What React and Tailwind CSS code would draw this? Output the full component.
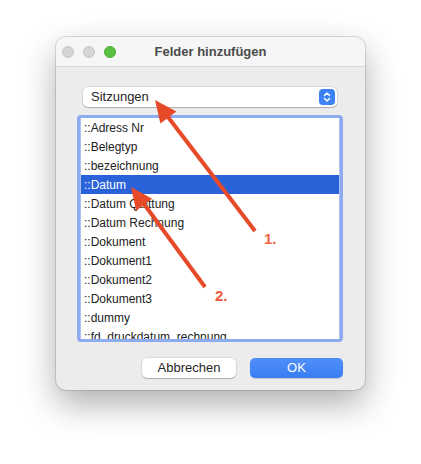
import React from "react";

const fields = [
  "::Adress Nr",
  "::Belegtyp",
  "::bezeichnung",
  "::Datum",
  "::Datum Quittung",
  "::Datum Rechnung",
  "::Dokument",
  "::Dokument1",
  "::Dokument2",
  "::Dokument3",
  "::dummy",
  "::fd_druckdatum_rechnung",
];

const Stepper = () => (
  <div className="w-4 h-4 rounded-[4px] bg-[#3b82f7] flex items-center justify-center">
    <svg width="10" height="12" viewBox="0 0 10 12" fill="none">
      <path d="M2.5 4.5 L5 2 L7.5 4.5" stroke="white" strokeWidth="1.5" strokeLinecap="round" strokeLinejoin="round" />
      <path d="M2.5 7.5 L5 10 L7.5 7.5" stroke="white" strokeWidth="1.5" strokeLinecap="round" strokeLinejoin="round" />
    </svg>
  </div>
);

// red annotation arrows drawn over the dialog
const Arrows = () => (
  <svg className="absolute inset-0 pointer-events-none" width="421" height="464" viewBox="0 0 421 464">
    <line x1="255" y1="231" x2="168" y2="117" stroke="#e64a28" strokeWidth="4" />
    <polygon points="155,100 176.4,111.4 160.4,123.6" fill="#e64a28" />
    <line x1="205" y1="287" x2="144" y2="204" stroke="#e64a28" strokeWidth="4" />
    <polygon points="131,187 152.1,198.8 136.1,210.7" fill="#e64a28" />
    <text x="264" y="244" fill="#ee6444" fontSize="15" fontWeight="bold" fontFamily="Liberation Sans, sans-serif">1.</text>
    <text x="215" y="301" fill="#ee5a38" fontSize="15" fontWeight="bold" fontFamily="Liberation Sans, sans-serif">2.</text>
  </svg>
);

const App = () => {
  return (
    <div className="relative w-[421px] h-[464px] bg-white pt-[37px] pl-[56px] font-['Liberation_Sans',sans-serif]">
      <div className="w-[309px] h-[353px] rounded-[10px] bg-[#ececec] overflow-hidden shadow-[0_0_0_1px_rgba(0,0,0,0.12),0_14px_34px_rgba(0,0,0,0.32)] flex flex-col">
        <div className="h-[30px] bg-[#f6f6f6] border-b border-[#d9d9d9] flex items-center relative">
          <div className="absolute left-[6px] top-[9px] flex gap-[9px]">
            <div className="w-3 h-3 rounded-full bg-[#d5d5d5] border border-[#c4c4c4]" />
            <div className="w-3 h-3 rounded-full bg-[#d5d5d5] border border-[#c4c4c4]" />
            <div className="w-3 h-3 rounded-full bg-[#5ac03f] border border-[#4aa832]" />
          </div>
          <div className="flex-1 text-center text-[13px] font-bold text-[#4b4b4b]">
            Felder hinzufügen
          </div>
        </div>

        <div className="mt-5 ml-[27px] w-[254px] h-5 bg-white rounded-[5px] shadow-[0_0_0_0.5px_rgba(0,0,0,0.15),0_1px_1px_rgba(0,0,0,0.2)] flex items-center justify-between pl-2 pr-[2px]">
          <span className="text-[13px] text-[#262626]">Sitzungen</span>
          <Stepper />
        </div>

        <div className="mt-2 ml-[21px] w-[266px] h-[227px] border-[3px] border-[#8eaaf0] rounded-[4px] bg-white overflow-hidden">
          <div className="h-full border-l border-r border-[#aebfee] overflow-hidden">
            {fields.map((f, i) => (
              <div
                key={f}
                className={
                  "h-[19px] flex items-center pl-[3px] text-[12px] " +
                  (i === 3 ? "bg-[#2a63d9] text-white" : "text-[#222222]")
                }
              >
                {f}
              </div>
            ))}
          </div>
        </div>

        <div className="mt-4 flex justify-end gap-[14px] pr-[22px]">
          <button className="w-[94px] h-5 rounded-[5px] bg-white text-[13px] text-[#262626] shadow-[0_0_0_0.5px_rgba(0,0,0,0.15),0_1px_1px_rgba(0,0,0,0.2)]">
            Abbrechen
          </button>
          <button className="w-[93px] h-5 rounded-[5px] bg-gradient-to-b from-[#4f8ff9] to-[#3a7ef5] text-[13px] text-white shadow-[0_1px_1px_rgba(0,0,0,0.15)]">
            OK
          </button>
        </div>
      </div>
      <Arrows />
    </div>
  );
};

export default App;
